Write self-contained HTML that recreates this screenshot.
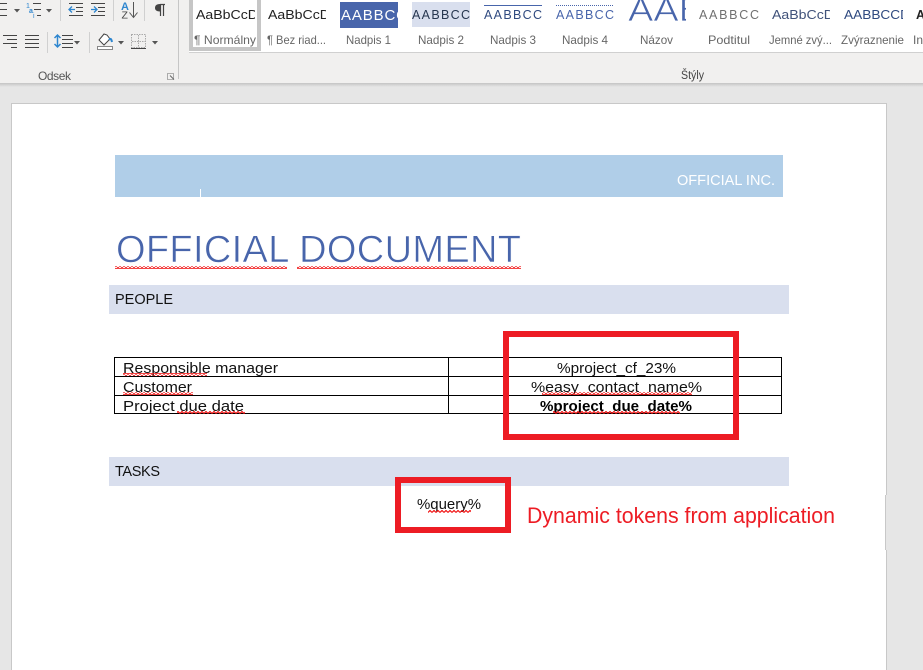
<!DOCTYPE html>
<html><head><meta charset="utf-8">
<style>
html,body{margin:0;padding:0;background:#e6e6e6;width:923px;height:670px;overflow:hidden}
svg{display:block}
text{font-family:"Liberation Sans",sans-serif}
</style></head><body>
<svg width="923" height="670" viewBox="0 0 923 670" xmlns="http://www.w3.org/2000/svg">
<defs>
<linearGradient id="sh" x1="0" y1="0" x2="0" y2="1"><stop offset="0" stop-color="#c4c4c4"/><stop offset="1" stop-color="#e6e6e6"/></linearGradient>
<pattern id="sq" width="4" height="3" patternUnits="userSpaceOnUse"><path d="M0 2.500L2 .5L4 2.500" fill="none" stroke="#f01010" stroke-width="1.200"/></pattern>
<clipPath id="c1"><rect x="340" y="0" width="58" height="30"/></clipPath>
<clipPath id="c2"><rect x="628" y="0" width="58" height="30"/></clipPath>
<clipPath id="c3"><rect x="195" y="0" width="60" height="30"/></clipPath>
<clipPath id="c4"><rect x="267" y="0" width="59" height="30"/></clipPath>
<clipPath id="c5"><rect x="772" y="0" width="58" height="30"/></clipPath>
<clipPath id="c6"><rect x="844" y="0" width="59" height="30"/></clipPath>
</defs>
<rect width="923" height="670" fill="#e6e6e6"/>
<rect width="923" height="83" fill="#f1f0ef"/>
<rect y="83" width="923" height="4" fill="url(#sh)"/>

<!-- paragraph group icons -->
<g stroke="#444" stroke-width="1" fill="none">
<path d="M0 3.500H7M0 9.500H7M0 15.500H7"/>
<path d="M33 3.500H41M34 9.500H41M37 15.500H41"/>
<path d="M3 35.500H17M7 39.500H17M3 43.500H17M11 47.500H17"/>
<path d="M25 35.500H39M25 39.500H39M25 43.500H39M25 47.500H39"/>
<path d="M69 3.500H83M76 7.500H83M76 11.500H83M69 15.500H83"/>
<path d="M91 3.500H105M98 7.500H105M98 11.500H105M91 15.500H105"/>
<path d="M62 35.500H73M62 39.500H73M62 43.500H73M62 47.500H73"/>
</g>
<path d="M14 9h6l-3 3.500zM46 9h6l-3 3.500zM74 41h6l-3 3.500zM118 41h6l-3 3.500zM152 41h6l-3 3.500z" fill="#555"/>
<text x="26" y="8" font-size="7" fill="#2e86cf">1</text>
<text x="29" y="13" font-size="7" font-weight="bold" fill="#2e86cf">a</text>
<text x="33" y="18" font-size="7" fill="#2e86cf">i</text>
<path d="M69 9.500H75M72 6.500L69 9.500L72 12.500M91 9.500H97M94 6.500L97 9.500L94 12.500" stroke="#2e86cf" stroke-width="1.300" fill="none"/>
<path d="M57.500 35V47M54.500 38L57.500 35L60.500 38M54.500 44L57.500 47L60.500 44" stroke="#2e86cf" stroke-width="1.500" fill="none"/>
<text x="121" y="10" font-size="11" font-weight="bold" fill="#2e86cf">A</text>
<text x="121.500" y="18.500" font-size="10.500" fill="#444">Z</text>
<path d="M133.500 2V17M129.500 12.500L133.500 17.500L137.500 12.500" stroke="#555" stroke-width="1" fill="none"/>
<path d="M160 4.500H165M160.500 4.500V16M163.500 4.500V16" stroke="#444" stroke-width="1.200" fill="none"/>
<path d="M160 4C156 4 155 6 155 8C155 10 156.500 11.500 160 11.500Z" fill="#444"/>
<path d="M104 34L99 40L104 45L110 39L107 35Z" fill="#fff" stroke="#444" stroke-width="1"/>
<path d="M109 40Q111 37 112 42" stroke="#2e86cf" stroke-width="2" fill="none"/>
<rect x="97.500" y="46.500" width="15" height="3" fill="#fff" stroke="#888"/>
<rect x="131.500" y="34.500" width="14" height="13" fill="none" stroke="#aaa" stroke-dasharray="1.500 1"/>
<path d="M138.500 35V47M132 41.500H145" stroke="#aaa" stroke-dasharray="1.500 1" fill="none"/>
<path d="M131 48.500H146" stroke="#444"/>
<g fill="#d0d0d0">
<rect x="60" y="0" width="1" height="21"/><rect x="113" y="0" width="1" height="21"/><rect x="144" y="0" width="1" height="21"/>
<rect x="47" y="32" width="1" height="21"/><rect x="89" y="32" width="1" height="21"/>
<rect x="178" y="0" width="1" height="79" fill="#c6c6c6"/>
</g>
<text x="38" y="80" font-size="12" textLength="33" lengthAdjust="spacing" fill="#555">Odsek</text>
<path d="M167.500 73.500H173.500V79.500H167.500Z" fill="none" stroke="#999" stroke-width=".8"/>
<path d="M170 75.500L174 79.500" stroke="#666"/>

<!-- style gallery -->
<rect x="189" y="0" width="734" height="52" fill="#fff"/>
<rect x="189" y="52" width="734" height="1" fill="#d0d0d0"/>
<path d="M191 0V49H259V0" fill="none" stroke="#c6c6c6" stroke-width="4"/>
<rect x="340" y="2" width="58" height="26" fill="#4865ab"/>
<rect x="412" y="2" width="58" height="25" fill="#d9dfee"/>
<rect x="484" y="5" width="58" height="1" fill="#4865ab"/>
<path d="M556 5.500H614" stroke="#4865ab" stroke-dasharray="1 1"/>
<g font-size="12.500">
<text x="196" y="19" textLength="62" lengthAdjust="spacingAndGlyphs" clip-path="url(#c3)" fill="#222">AaBbCcD</text>
<text x="268" y="19" textLength="62" lengthAdjust="spacingAndGlyphs" clip-path="url(#c4)" fill="#222">AaBbCcD</text>
<text x="341" y="20" font-size="15" textLength="66" lengthAdjust="spacing" clip-path="url(#c1)" fill="#fff">AABBCC</text>
<text x="412" y="19" textLength="58" lengthAdjust="spacing" fill="#26364f">AABBCC</text>
<text x="484" y="19" textLength="58" lengthAdjust="spacing" fill="#2f4a80">AABBCC</text>
<text x="556" y="19" textLength="58" lengthAdjust="spacing" fill="#4865ab">AABBCC</text>
<text x="628" y="21" font-size="33" textLength="76" lengthAdjust="spacingAndGlyphs" clip-path="url(#c2)" fill="#4865ab" stroke="#fff" stroke-width=".7">AAB</text>
<text x="699" y="19" textLength="60" lengthAdjust="spacing" fill="#707070">AABBCC</text>
<text x="772" y="19" textLength="62" lengthAdjust="spacingAndGlyphs" clip-path="url(#c5)" fill="#40527a">AaBbCcD</text>
<text x="844" y="19" textLength="66" lengthAdjust="spacingAndGlyphs" clip-path="url(#c6)" fill="#2f4a80">AABBCCD</text>
<text x="916" y="19" font-weight="bold" fill="#222">A</text>
</g>
<g font-size="12" fill="#666">
<text x="194" y="44" textLength="62" lengthAdjust="spacingAndGlyphs">¶ Normálny</text>
<text x="267" y="44" textLength="59" lengthAdjust="spacingAndGlyphs">¶ Bez riad...</text>
<text x="346" y="44" textLength="45" lengthAdjust="spacingAndGlyphs">Nadpis 1</text>
<text x="418" y="44" textLength="46" lengthAdjust="spacingAndGlyphs">Nadpis 2</text>
<text x="490" y="44" textLength="46" lengthAdjust="spacingAndGlyphs">Nadpis 3</text>
<text x="562" y="44" textLength="46" lengthAdjust="spacingAndGlyphs">Nadpis 4</text>
<text x="640" y="44" textLength="33" lengthAdjust="spacingAndGlyphs">Názov</text>
<text x="708" y="44" textLength="42" lengthAdjust="spacingAndGlyphs">Podtitul</text>
<text x="769" y="44" textLength="63" lengthAdjust="spacingAndGlyphs">Jemné zvý...</text>
<text x="841" y="44" textLength="63" lengthAdjust="spacingAndGlyphs">Zvýraznenie</text>
<text x="913" y="44" textLength="10" lengthAdjust="spacingAndGlyphs">In</text>
</g>
<text x="681" y="79" font-size="11.500" textLength="23" lengthAdjust="spacingAndGlyphs" fill="#444">Štýly</text>

<!-- page -->
<rect x="11.500" y="103.500" width="875" height="580" fill="#fff" stroke="#c8c8c8"/>
<rect x="885" y="495" width="1" height="55" fill="#c8c8c8"/>
<rect x="886" y="495" width="1" height="55" fill="#e6e6e6"/>

<rect x="115" y="155" width="668" height="42" fill="#b0cee8"/>
<rect x="200" y="189" width="1" height="8" fill="#fff"/>
<text x="677" y="185" font-size="15" textLength="98" lengthAdjust="spacingAndGlyphs" fill="#fff">OFFICIAL INC.</text>

<text x="116" y="262" font-size="38" textLength="405" lengthAdjust="spacing" fill="#4865ab" stroke="#fff" stroke-width=".6">OFFICIAL DOCUMENT</text>
<rect x="115" y="266" width="172" height="3" fill="url(#sq)"/>
<rect x="297" y="266" width="224" height="3" fill="url(#sq)"/>

<rect x="109" y="285" width="680" height="29" fill="#d9dfee"/>
<text x="115" y="304" font-size="14.500" textLength="58" lengthAdjust="spacing" fill="#111">PEOPLE</text>

<path d="M114.500 357.500H781.500V413.500H114.500ZM114.500 376.500H781.500M114.500 395.500H781.500M448.500 357.500V413.500" stroke="#000" stroke-width="1" fill="none"/>
<g font-size="15" fill="#111">
<text x="123" y="373" textLength="155" lengthAdjust="spacingAndGlyphs">Responsible manager</text>
<text x="123" y="392" textLength="69" lengthAdjust="spacingAndGlyphs">Customer</text>
<text x="123" y="411" textLength="121" lengthAdjust="spacingAndGlyphs">Project due date</text>
<text x="557" y="373" textLength="119" lengthAdjust="spacingAndGlyphs">%project_cf_23%</text>
<text x="531" y="392" textLength="171" lengthAdjust="spacingAndGlyphs">%easy_contact_name%</text>
<text x="540" y="411" textLength="152" lengthAdjust="spacingAndGlyphs" font-weight="bold" fill="#000">%project_due_date%</text>
<text x="417" y="509" textLength="64" lengthAdjust="spacingAndGlyphs">%query%</text>
</g>
<rect x="123" y="373" width="84" height="3" fill="url(#sq)"/>
<rect x="123" y="392" width="70" height="3" fill="url(#sq)"/>
<rect x="177" y="411" width="68" height="3" fill="url(#sq)"/>
<rect x="542" y="392" width="150" height="3" fill="url(#sq)"/>
<rect x="553" y="411" width="127" height="3" fill="url(#sq)"/>
<rect x="428" y="510" width="43" height="3" fill="url(#sq)"/>

<rect x="109" y="457" width="680" height="29" fill="#d9dfee"/>
<text x="115" y="476" font-size="14.500" textLength="45" lengthAdjust="spacing" fill="#111">TASKS</text>

<rect x="506" y="334" width="230" height="103" fill="none" stroke="#ed1c24" stroke-width="6"/>
<rect x="398" y="480" width="110" height="50" fill="none" stroke="#ed1c24" stroke-width="6"/>
<text x="527" y="523" font-size="22" textLength="308" lengthAdjust="spacingAndGlyphs" fill="#ed1c24">Dynamic tokens from application</text>
</svg>
</body></html>
